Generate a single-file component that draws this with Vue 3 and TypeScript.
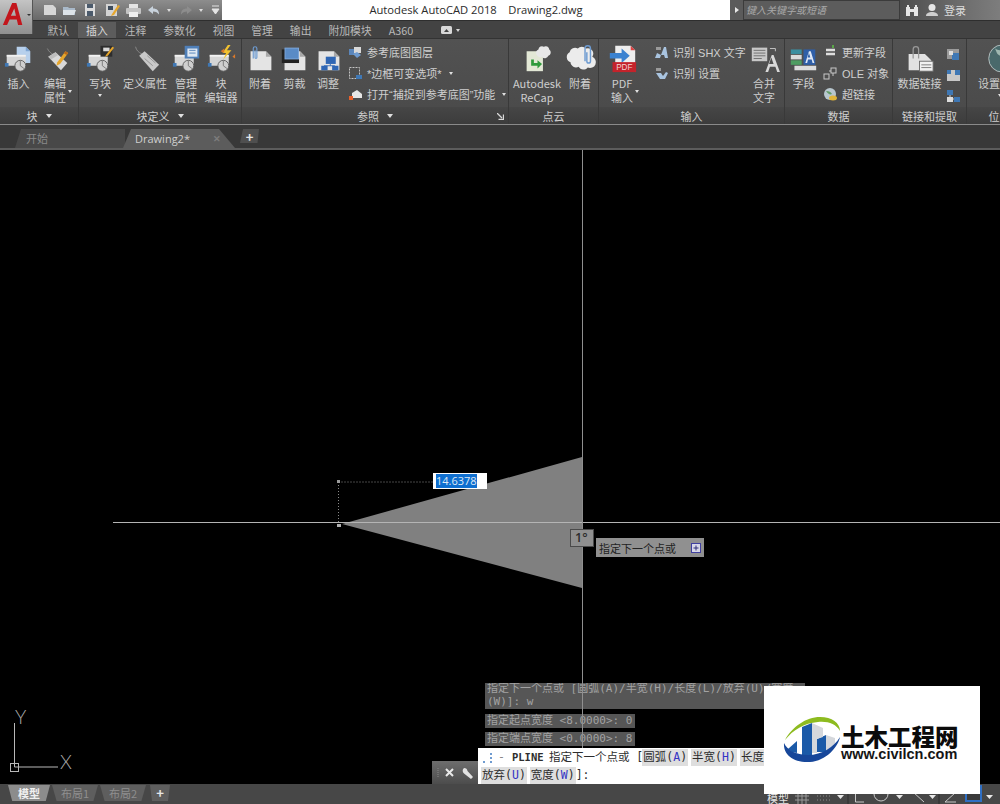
<script setup lang="ts">
interface Big { kind: 'big'; w: number; icon: string; label: string[]; caret?: boolean }
interface Small { kind: 'small'; w: number; pad?: number; rows: { icon: string; text: string; caret?: boolean }[] }
interface Mini { kind: 'mini'; w: number; icons: string[] }
interface Panel { title: string; w: number; caret?: boolean; launcher?: boolean; items: (Big | Small | Mini)[] }

const tabs = ['默认', '插入', '注释', '参数化', '视图', '管理', '输出', '附加模块', 'A360']

const box = '<rect x="3" y="12" width="21" height="12" fill="#d6d6d6"/><rect x="3" y="12" width="21" height="2" fill="#f2f2f2"/><circle cx="18" cy="24" r="6" fill="#cfcfcf" stroke="#5c5c5c"/><path d="M18 24V18M18 24l4 3" stroke="#777" fill="none"/><rect x="1" y="21" width="4" height="4" fill="#3f78b5"/>'
const sheet = '<path d="M5 8h17l6 6v15H5z" fill="#e4e4e4"/><path d="M22 8l6 6h-6z" fill="#a8a8a8"/>'

const icons: Record<string, string> = {
  insert: '<path d="M14 3h10l5 5v13H14z" fill="#b7d0ec"/><path d="M24 3l5 5h-5z" fill="#7fa6d4"/>' + box,
  editattr: '<path d="M7 5c2 4 4 5 7 7" stroke="#8a8a8a" fill="none"/><path d="M8 14l8-5 13 12-7 8z" fill="#d9d9d9"/><path d="M8 14l8-5 3 3-8 5z" fill="#bdbdbd"/><path d="M18 20l9-12 3 2-9 12-4 2z" fill="#e6a62c"/><path d="M27 8l3 2-2 2-3-2z" fill="#b96a1a"/>',
  write: box + '<rect x="16" y="2" width="13" height="12" fill="#2d2d2d"/><rect x="19" y="4" width="7" height="4" fill="#d9d9d9"/><path d="M22 12l7-9 2 1-7 9-3 1z" fill="#e6a62c"/>',
  define: '<path d="M5 3c1 4 3 6 7 8" stroke="#8a8a8a" fill="none"/><path d="M9 13l6-5 16 15-7 7z" fill="#c9c9c9"/><path d="M15 16l9 8M18 13l9 8" stroke="#8f8f8f"/>',
  manage: box + '<rect x="14" y="2" width="16" height="14" fill="#4f7fb8"/><rect x="17" y="5" width="11" height="9" fill="#dfe8f2"/><path d="M19 7h7M19 10h7" stroke="#4f7fb8"/>',
  editor: box + '<path d="M23 1l-6 9h4l-3 7 9-10h-5l4-6z" fill="#f2c230"/><path d="M15 8l4-3v5zM28 14l3-3v5z" fill="#d9792b"/>',
  attach: sheet + '<path d="M8 16V5a2 2 0 0 1 4 0v10a1 1 0 0 1-2 0V7" stroke="#6d9bd1" stroke-width="1.3" fill="none"/>',
  clip: sheet + '<rect x="2" y="6" width="19" height="15" fill="#222"/><rect x="5" y="4" width="16" height="13" fill="#7fa8da"/><rect x="6" y="5" width="14" height="11" fill="#5a8bc6"/>',
  adjust: sheet + '<rect x="13" y="14" width="11" height="8" fill="#2f66b4"/><rect x="8" y="24" width="7" height="5" fill="#2f66b4"/><rect x="20" y="24" width="7" height="5" fill="#2f66b4"/><path d="M18 22v2M11 24h12" stroke="#2f66b4"/>',
  recap: '<path d="M4 8h18v22H4z" fill="#e3e8d6"/><path d="M9 17v7h7v3l5-5-5-4v3h-4v-4z" fill="#2f9a3c"/><path d="M17 6a4 4 0 0 1 6-3 4 4 0 0 1 6 3 4 4 0 0 1-1 7 4 4 0 0 1-7 1 4 4 0 0 1-4-8z" fill="#e8e8e8"/>',
  cloud: '<path d="M4 9a6 6 0 0 1 9-4 6 6 0 0 1 9 0 6 6 0 0 1 7 9 6 6 0 0 1-5 12 6 6 0 0 1-10-1 6 6 0 0 1-9-5 6 6 0 0 1-1-11z" fill="#ececec"/><path d="M21 19V5a3 3 0 0 1 6 0v14a2 2 0 0 1-4 0V9" stroke="#6d9bd1" stroke-width="1.6" fill="none"/>',
  pdf: '<path d="M8 2h17l5 5v17H8z" fill="#eeeeee"/><path d="M25 2l5 5h-5z" fill="#d44"/><path d="M2 10h13V5l9 8-9 8v-5H2z" fill="#3b82d0"/><rect x="5" y="20" width="26" height="11" fill="#c4232b"/><text x="18" y="29" font-size="9" text-anchor="middle" fill="#f4d4d4" font-family="Liberation Sans">PDF</text>',
  merge: '<rect x="2" y="4" width="17" height="15" fill="#c8c8c8"/><path d="M4 7h13M4 10h13M4 13h13M4 16h9" stroke="#6a6a6a"/><path d="M22 5h6v3" stroke="#ccc" fill="none"/><path d="M17 31l7-19h2l7 19h-3l-2-6h-6l-2 6zM21 22h5l-2.500-7z" fill="#d8d8d8" fill-rule="evenodd"/>',
  field: '<rect x="2" y="6" width="12" height="5" fill="#3d8fa0"/><rect x="2" y="12" width="12" height="5" fill="#dcdcdc"/><rect x="2" y="18" width="12" height="5" fill="#4f9d62"/><rect x="16" y="6" width="13" height="17" fill="#2f5fa8"/><path d="M18 21l4-13h2l4 13h-2l-1-4h-4l-1 4zM20.500 15h3L22 10z" fill="#dfe8f5" fill-rule="evenodd"/><rect x="6" y="24" width="24" height="5" fill="#dcdcdc"/>',
  datalink: '<path d="M4 11h18l7 7v11H4z" fill="#e2e2e2"/><rect x="16" y="19" width="15" height="11" fill="#f2f2f2" stroke="#6a6a6a"/><path d="M18 23h11M18 26h11" stroke="#777"/><path d="M9 16V6a3 3 0 0 1 6 0v10" stroke="#999" stroke-width="1.4" fill="none"/>',
  globe: '<circle cx="18" cy="16" r="15" fill="#49696b"/><circle cx="18" cy="16" r="15" fill="none" stroke="#b9c4c4"/><path d="M10 5c4 3 8 2 10 0 3 2 6 2 8 1-1 4-6 4-8 7-4 1-7-1-8-3z" fill="#9fb7b0"/>',
  layers: '<path d="M1 4h7v6H1z" fill="#5b86bb"/><path d="M6 2h7v6H6z" fill="#d9d9d9"/><path d="M5 9l4-2 4 3-4 3z" fill="#6f9bd0"/>',
  frame: '<rect x="1.500" y="1.500" width="10" height="11" fill="none" stroke="#c4c4c4" stroke-dasharray="2 1"/><rect x="8" y="9" width="6" height="4" fill="#3f78b5"/>',
  snap: '<path d="M4 6l5-3 5 4v4H4z" fill="#e6e6e6"/><rect x="1" y="9" width="4" height="4" fill="#e8612b"/>',
  shx: '<path d="M2 2h5v3H2z" fill="#9a9a9a"/><path d="M1 13l2-5 4 2 3-8h2l2 11h-3l-1-3H7l-1 3z" fill="#a9c4e0"/>',
  ocrset: '<path d="M2 2h5v3H2z" fill="#9a9a9a"/><path d="M2 7h5l2 3 3-4 2 1-3 6H6z" fill="#a9c4e0"/>',
  update: '<path d="M3 5h9M3 9h9" stroke="#dedede" stroke-width="2.500"/><path d="M10 0v3" stroke="#5aa648" stroke-width="2"/>',
  ole: '<rect x="1" y="8" width="5" height="5" fill="none" stroke="#c8c8c8"/><rect x="8" y="2" width="5" height="5" fill="none" stroke="#c8c8c8"/><path d="M6 5h2M10 7v3" stroke="#c8c8c8"/>',
  link: '<circle cx="7" cy="7" r="6" fill="#b8c7cf"/><path d="M3 4c3 0 5 1 6 3-2 1-4 0-6-3z" fill="#5f9b66"/><ellipse cx="10" cy="11" rx="4" ry="2.500" fill="#e0b53a"/>',
  mini1: '<rect x="1" y="2" width="12" height="10" fill="#9b9b9b"/><rect x="6" y="6" width="7" height="7" fill="#3f78b5"/><path d="M3 4h4v4H3z" fill="#dedede"/>',
  mini2: '<rect x="1" y="2" width="13" height="11" fill="#c8c8c8"/><rect x="1" y="2" width="4" height="4" fill="#3f78b5"/><rect x="9" y="2" width="5" height="5" fill="#3f78b5"/>',
  mini3: '<rect x="1" y="1" width="6" height="5" fill="#3f78b5"/><rect x="8" y="8" width="6" height="5" fill="#3f78b5"/><rect x="1" y="8" width="6" height="5" fill="#ddd"/><path d="M4 6v2M7 10h1" stroke="#ccc"/>',
}

const panels: Panel[] = [
  { title: '块', w: 79, caret: true, items: [
    { kind: 'big', w: 37, icon: 'insert', label: ['插入'] },
    { kind: 'big', w: 36, icon: 'editattr', label: ['编辑', '属性'], caret: true },
  ] },
  { title: '块定义', w: 163, caret: true, items: [
    { kind: 'big', w: 42, icon: 'write', label: ['写块'], caret: true },
    { kind: 'big', w: 48, icon: 'define', label: ['定义属性'] },
    { kind: 'big', w: 34, icon: 'manage', label: ['管理', '属性'] },
    { kind: 'big', w: 36, icon: 'editor', label: ['块', '编辑器'] },
  ] },
  { title: '参照', w: 267, caret: true, launcher: true, items: [
    { kind: 'big', w: 36, icon: 'attach', label: ['附着'] },
    { kind: 'big', w: 33, icon: 'clip', label: ['剪裁'] },
    { kind: 'big', w: 34, icon: 'adjust', label: ['调整'] },
    { kind: 'small', w: 160, rows: [
      { icon: 'layers', text: '参考底图图层' },
      { icon: 'frame', text: '*边框可变选项*', caret: true },
      { icon: 'snap', text: '打开“捕捉到参考底图”功能', caret: true },
    ] },
  ] },
  { title: '点云', w: 90, items: [
    { kind: 'big', w: 56, icon: 'recap', label: ['Autodesk', 'ReCap'] },
    { kind: 'big', w: 30, icon: 'cloud', label: ['附着'] },
  ] },
  { title: '输入', w: 186, items: [
    { kind: 'big', w: 46, icon: 'pdf', label: ['PDF', '输入'], caret: true },
    { kind: 'small', w: 100, pad: 9, rows: [
      { icon: 'shx', text: '识别 SHX 文字' },
      { icon: 'ocrset', text: '识别 设置' },
    ] },
    { kind: 'big', w: 38, icon: 'merge', label: ['合并', '文字'] },
  ] },
  { title: '数据', w: 108, items: [
    { kind: 'big', w: 37, icon: 'field', label: ['字段'] },
    { kind: 'small', w: 70, pad: 1, rows: [
      { icon: 'update', text: '更新字段' },
      { icon: 'ole', text: 'OLE 对象' },
      { icon: 'link', text: '超链接' },
    ] },
  ] },
  { title: '链接和提取', w: 74, items: [
    { kind: 'big', w: 53, icon: 'datalink', label: ['数据链接'] },
    { kind: 'mini', w: 18, icons: ['mini1', 'mini2', 'mini3'] },
  ] },
  { title: '位置', w: 66, items: [
    { kind: 'big', w: 66, icon: 'globe', label: ['设置位置'], caret: true },
  ] },
]
</script>

<template>
  <div class="app">
    <header class="top">
      <div class="logo">
        <svg width="22" height="24" viewBox="0 0 26 26" preserveAspectRatio="none">
          <path d="M1 25L12 1h5l7 24h-5l-1.500-6H9l-3 6zM10.500 15h6L14.500 7z" fill="#c3161c" fill-rule="evenodd" />
        </svg>
        <span class="logo-caret"></span>
      </div>
      <div class="top-right">
        <div class="titlebar">
          <div class="qat">
            <svg width="178" height="14" viewBox="0 0 178 14">
              <path d="M2 2h9l3 3v7H2z" fill="#d6d6d6" />
              <path d="M21 4h5l1 1h6v7H21z" fill="#a9b9c9" />
              <path d="M21 7h13l-2 5H21z" fill="#dde3e8" />
              <rect x="43" y="1" width="10" height="12" fill="#dcdcdc" />
              <rect x="45" y="1" width="6" height="4" fill="#4b5a6b" />
              <rect x="45" y="8" width="6" height="5" fill="#4b5a6b" />
              <rect x="64" y="1" width="11" height="12" fill="#d3d3d3" />
              <rect x="66" y="3" width="5" height="4" fill="#3e4c5c" />
              <path d="M70 11l6-9 2 1-6 9-3 1z" fill="#e6a62c" />
              <rect x="87" y="1" width="9" height="4" fill="#e4e4e4" />
              <rect x="84" y="5" width="15" height="6" rx="1" fill="#c4c4c4" />
              <rect x="87" y="9" width="9" height="5" fill="#efefef" />
              <path d="M106 7l5-4v2.500c4 0 6 2 6 6-1.500-2-3-3-6-3V11z" fill="#c8d2dc" />
              <path d="M125 6h4l-2 3z" fill="#ddd" />
              <path d="M150 7l-5-4v2.500c-4 0-6 2-6 6 1.500-2 3-3 6-3V11z" fill="#8d8d8d" />
              <path d="M157 6h4l-2 3z" fill="#ddd" />
              <path d="M170 3h7M170 6h7l-3.500 5z" stroke="#e4e4e4" fill="#e4e4e4" />
            </svg>
          </div>
          <div class="title">Autodesk AutoCAD 2018&nbsp;&nbsp;&nbsp;&nbsp;Drawing2.dwg</div>
          <div class="search-arrow"><span></span></div>
          <div class="search">键入关键字或短语</div>
          <div class="account">
            <svg width="14" height="13" viewBox="0 0 14 13">
              <path d="M1 3h4v9H1zM9 3h4v9H9zM5 5h4v3H5zM2 1h2v2H2zM10 1h2v2h-2z" fill="#e6e6e6" />
            </svg>
            <svg width="14" height="14" viewBox="0 0 14 14">
              <circle cx="7" cy="4.500" r="3.500" fill="#e6e6e6" />
              <path d="M1 13c0-3 3-4 6-4s6 1 6 4z" fill="#cfcfcf" />
            </svg>
            <span>登录</span>
          </div>
        </div>
        <nav class="tabs">
          <span v-for="t in tabs" :key="t" class="tab" :class="{ on: t === '插入' }">{{ t }}</span>
          <svg class="tab-video" width="22" height="8" viewBox="0 0 22 8">
            <rect x="0" y="0" width="11" height="8" rx="1.500" fill="#d8d8d8" />
            <path d="M3 6l2.500-3L8 6z" fill="#444" />
            <path d="M15 3h4l-2 3z" fill="#d8d8d8" />
          </svg>
        </nav>
      </div>
    </header>

    <section class="ribbon">
      <div v-for="p in panels" :key="p.title" class="panel" :style="{ width: p.w + 'px' }">
        <div class="panel-body">
          <template v-for="(it, i) in p.items" :key="i">
            <div v-if="it.kind === 'big'" class="big" :style="{ width: it.w + 'px' }">
              <svg class="big-icon" width="29" height="29" viewBox="0 0 32 32" v-html="icons[it.icon]"></svg>
              <div class="big-label">
                <div v-for="l in it.label" :key="l">{{ l }}</div>
              </div>
              <span v-if="it.caret" class="caret" :class="it.label.length > 1 ? 'caret-side' : 'caret-under'"></span>
            </div>
            <div v-else-if="it.kind === 'small'" class="small" :style="{ width: it.w + 'px', paddingLeft: (it.pad ?? 3) + 'px' }">
              <div v-for="r in it.rows" :key="r.text" class="small-row">
                <svg width="14" height="14" viewBox="0 0 14 14" v-html="icons[r.icon]"></svg>
                <span>{{ r.text }}</span>
                <span v-if="r.caret" class="caret"></span>
              </div>
            </div>
            <div v-else class="mini" :style="{ width: it.w + 'px' }">
              <svg v-for="m in it.icons" :key="m" width="14" height="14" viewBox="0 0 14 14" v-html="icons[m]"></svg>
            </div>
          </template>
        </div>
        <div class="panel-title">
          <span>{{ p.title }}</span>
          <span v-if="p.caret" class="caret caret-title"></span>
          <svg v-if="p.launcher" class="launcher" width="7" height="7" viewBox="0 0 7 7">
            <path d="M0 0l5 5M6.500 1.500v5h-5" stroke="#d8d8d8" fill="none" stroke-width="1.300" />
          </svg>
        </div>
      </div>
    </section>

    <div class="doctabs">
      <div class="doc doc-start"><span>开始</span></div>
      <div class="doc doc-active"><span>Drawing2*</span><i>✕</i></div>
      <div class="doc doc-plus">+</div>
    </div>

    <main class="canvas">
      <div class="history">
        <div class="hist-block">
          <div><span class="hist-line">指定下一个点或 [圆弧(A)/半宽(H)/长度(L)/放弃(U)/宽度</span></div>
          <div><span class="hist-line">(W)]: w</span></div>
        </div>
        <div class="hist-single">指定起点宽度 &lt;8.0000&gt;: 0</div>
        <div class="hist-single">指定端点宽度 &lt;0.0000&gt;: 8</div>
      </div>

      <svg class="drawing" width="1000" height="634" viewBox="0 150 1000 634">
        <polygon points="342,524 582,457 582,588" fill="#808080" />
        <path d="M338.500 482V525M338.500 482H434" stroke="#8a8a8a" stroke-dasharray="1 2" fill="none" />
        <rect x="337" y="480" width="3" height="3" fill="#9a9a9a" />
        <rect x="337" y="524" width="4" height="3" fill="#b0b0b0" />
        <path d="M113 522.500H1000" stroke="#b4b4b4" />
        <path d="M582.500 150V748" stroke="#8f8f8f" />
        <path d="M14.500 723V767H58" stroke="#b8b8b8" fill="none" />
        <rect x="10.500" y="763.500" width="8" height="8" fill="none" stroke="#b8b8b8" />
      </svg>
      <span class="ucs ucs-y">Y</span>
      <span class="ucs ucs-x">X</span>

      <div class="dyn-input"><span>14.6378</span></div>
      <div class="angle">1°</div>
      <div class="prompt">
        <span>指定下一个点或</span>
        <svg width="10" height="10" viewBox="0 0 10 10">
          <rect x="0.500" y="0.500" width="9" height="9" fill="#d8d8e8" stroke="#4040a0" />
          <path d="M5 2.500v5M2.500 5h5" stroke="#30307a" />
        </svg>
      </div>

      <div class="cmd">
        <div class="cmd-grip">
          <svg width="42" height="14" viewBox="0 0 42 14">
            <path d="M2 2v10" stroke="#8a8a8a" stroke-dasharray="1 1" />
            <path d="M10 3l7 7M17 3l-7 7" stroke="#eaeaea" stroke-width="2" />
            <path d="M28 2a3.500 3.500 0 0 0 0 5.500l7 5.500 2-2-5.500-6a3.500 3.500 0 0 0-3.500-3z" fill="#e2e2e2" />
          </svg>
        </div>
        <div class="cmd-input">
          <div class="cmd-line">
            <svg class="cmd-icon" width="14" height="12" viewBox="0 0 14 12">
              <path d="M2 10h2M9 2h2M9 6h2M9 10h2" stroke="#6f9bd0" stroke-width="2" />
            </svg>
            <span class="cmd-dash">-</span>
            <b>PLINE</b>
            <span>指定下一个点或 [</span><span class="chip tight">圆弧(<em>A</em>)</span><span class="chip">半宽(<em>H</em>)</span><span class="chip">长度(<em>L</em>)</span>
          </div>
          <div class="cmd-line">
            <span class="chip first">放弃(<em>U</em>)</span><span class="chip">宽度(<em>W</em>)</span><span>]:</span>
          </div>
        </div>
      </div>
    </main>

    <footer class="status">
      <div class="layout-tabs">
        <div class="ltab ltab-on">模型</div>
        <div class="ltab">布局1</div>
        <div class="ltab">布局2</div>
        <div class="ltab ltab-plus">+</div>
      </div>
      <div class="status-right">
        <span class="status-model">模型</span>
        <svg width="209" height="20" viewBox="0 0 209 20">
          <path d="M7 3v17M11 3v17M15 3v17M4 12h14M4 16h14" stroke="#9a9a9a" />
          <path d="M26 12h14M26 16h14" stroke="#8c8c8c" stroke-dasharray="1 2" />
          <path d="M46 11h7l-3.500 4z" fill="#e8e8e8" />
          <path d="M57 6v14" stroke="#2f2f2f" />
          <path d="M64.500 8v10H73" stroke="#c8c8c8" fill="none" />
          <circle cx="90" cy="10" r="7" stroke="#c8c8c8" fill="none" />
          <path d="M105 11h7l-3.500 4z" fill="#e8e8e8" />
          <path d="M122 8l11 10" stroke="#c8c8c8" />
          <path d="M138 11h7l-3.500 4z" fill="#e8e8e8" />
          <path d="M148 8v12" stroke="#2f2f2f" />
          <path d="M154 18l10-9M154 18h11" stroke="#c8c8c8" fill="none" />
          <path d="M175 2h15v15h-15z" stroke="#2f6fc4" stroke-width="2" fill="#3a3a3a" />
          <path d="M195 11h7l-3.500 4z" fill="#e8e8e8" />
        </svg>
      </div>
    </footer>

    <aside class="mark">
      <svg class="mark-logo" width="58" height="48" viewBox="0 0 58 48">
        <path d="M1 23C8 10 22 0 36 0c12 0 20 6 20 14-4-7-12-10-22-9C20 6 9 13 1 23z" fill="#8dbb1f" />
        <path d="M18 10l10-4v32H18zM4 32l9-8v12l-5-1zM33 22l9-4v17h-9z" fill="#1b5aa8" />
        <path d="M28 6l11 5v9l-6 2v14h-5zM42 18l9 3v6l-9 7z" fill="#d5d8dc" />
        <path d="M0 26c-1 12 10 20 26 19 16-1 28-15 30-25-6 10-18 18-32 18C12 38 3 33 0 26z" fill="#17479a" />
      </svg>
      <div class="mark-text">
        <div class="mark-cn">土木工程网</div>
        <div class="mark-url">www.civilcn.com</div>
      </div>
    </aside>
  </div>
</template>

<style>
html, body { margin: 0; background: #000; }
</style>

<style scoped>
* { box-sizing: border-box; }
.app {
  position: relative;
  width: 1000px;
  height: 804px;
  overflow: hidden;
  display: flex;
  flex-direction: column;
  font-family: "Noto Sans CJK SC", "Noto Sans", sans-serif;
  font-size: 11px;
  color: #cfcfcf;
  background: #000;
}

/* top bar */
.top { display: flex; height: 38px; background: #434343; }
.logo {
  width: 33px;
  height: 34px;
  display: flex;
  align-items: center;
  padding: 0 0 6px 2px;
  background: linear-gradient(#c4c4c4, #8f8f8f);
  border-right: 1px solid #555;
  position: relative;
}
.logo-caret { position: absolute; right: 1px; top: 14px; border: 2.5px solid transparent; border-top-color: #333; }
.top-right { flex: 1; display: flex; flex-direction: column; min-width: 0; }
.titlebar { display: flex; height: 20px; }
.qat {
  width: 189px;
  display: flex;
  align-items: center;
  padding: 0 0 0 9px;
  background: linear-gradient(#8d8d8d, #686868);
}
.title {
  width: 508px;
  background: #fff;
  color: #2b2b2b;
  text-align: center;
  font: 11.2px/20px "Open Sans", sans-serif;
}
.search-arrow {
  width: 13px;
  display: flex;
  align-items: center;
  justify-content: center;
  background: #5b5b5b;
}
.search-arrow span { border: 3px solid transparent; border-left: 4px solid #e8e8e8; border-right: 0; }
.search {
  width: 157px;
  background: #5c5c5c;
  border: 1px solid #3b3b3b;
  color: #a8a8a8;
  font-size: 10px;
  font-style: italic;
  line-height: 17px;
  padding-left: 2px;
}
.account {
  flex: 1;
  display: flex;
  align-items: center;
  gap: 6px;
  padding-left: 5px;
  background: linear-gradient(90deg, #4e4e4e, #6c6c6c 60%, #7d7d7d);
  color: #dcdcdc;
}
.account span { margin-left: -1px; }
.tabs {
  flex: 1;
  display: flex;
  align-items: flex-end;
  padding-left: 6px;
  background: #434343;
  border-top: 1px solid #2e2e2e;
}
.tab { padding: 0 8.5px; height: 16px; font-size: 10.8px; line-height: 16px; color: #b9b9b9; white-space: nowrap; }
.tab.on { background: #5c5c5c; color: #d8d8d8; padding: 0 8px; margin: 0 .5px; }
.tab-video { margin: 0 0 4px 19px; }

/* ribbon */
.ribbon {
  display: flex;
  height: 87px;
  background: #3f3f3f;
  border-top: 1px solid #333;
  border-bottom: 1px solid #8a8a8a;
}
.panel {
  flex: none;
  display: flex;
  flex-direction: column;
  border-right: 1px solid #393939;
  overflow: hidden;
}
.panel-body {
  height: 68px;
  display: flex;
  background: linear-gradient(#525252, #4b4b4b);
}
.panel-title {
  position: relative;
  flex: 1;
  display: flex;
  align-items: center;
  justify-content: center;
  gap: 8px;
  background: linear-gradient(#464646, #3c3c3c);
  color: #cfcfcf;
}
.launcher { position: absolute; right: 4px; top: 6px; }
.big {
  flex: none;
  position: relative;
  display: flex;
  flex-direction: column;
  align-items: center;
  padding-top: 5px;
  line-height: 14px;
  text-align: center;
}
.big-icon { flex: none; overflow: visible; }
.big-label { margin-top: 3px; white-space: nowrap; }
.caret { display: inline-block; border: 2.5px solid transparent; border-top: 3px solid #e0e0e0; border-bottom: 0; }
.caret-title { border-width: 4px 3.5px 0; }
.caret-side { position: absolute; left: calc(50% + 13px); top: 51px; }
.caret-under { margin-top: 4px; }
.small {
  flex: none;
  display: flex;
  flex-direction: column;
  gap: 7px;
  padding-top: 6px;
}
.small-row {
  display: flex;
  align-items: center;
  gap: 5px;
  height: 14px;
  white-space: nowrap;
  font-family: "Liberation Sans", "Noto Sans CJK SC", sans-serif;
}
.small-row svg { flex: none; }
.small-row .caret { margin-left: 2px; }
.mini { display: flex; flex-direction: column; gap: 7px; padding-top: 8px; }

/* document tabs */
.doctabs {
  height: 25px;
  display: flex;
  align-items: flex-end;
  padding-left: 15px;
  background: #383838;
  border-bottom: 2px solid #5c5c5c;
}
.doc { height: 19px; display: flex; align-items: center; }
.doc-start {
  width: 110px;
  padding: 0 0 1px 11px;
  color: #8a8a8a;
  background: #484848;
  clip-path: polygon(0 100%, 6px 0, 100% 0, 100% 100%);
}
.doc-active {
  width: 112px;
  margin-left: -2px;
  padding: 0 14px 1px 12px;
  justify-content: space-between;
  background: #5c5c5c;
  color: #cfcfcf;
  font: 11px "Open Sans", sans-serif;
  clip-path: polygon(0 100%, 8px 0, 96px 0, 100% 100%);
}
.doc-active i { font-style: normal; font-size: 9px; font-weight: 700; color: #7d7d7d; }
.doc-plus {
  width: 19px;
  height: 14px;
  margin: 0 0 5px 5px;
  justify-content: center;
  background: #4f4f4f;
  color: #e4e4e4;
  font-size: 13px;
  font-weight: 700;
  clip-path: polygon(0 100%, 3px 0, 100% 0, 92% 100%);
}

/* canvas */
.canvas { position: relative; flex: 1; background: #000; overflow: hidden; }
.drawing { position: absolute; left: 0; top: 0; z-index: 1; pointer-events: none; }
.ucs { position: absolute; z-index: 1; color: #a8a8a8; font: 300 19px "Lato", sans-serif; }
.ucs-y { left: 15px; top: 555px; }
.ucs-x { left: 60px; top: 600px; }
.dyn-input {
  position: absolute;
  z-index: 2;
  left: 433px;
  top: 323px;
  width: 54px;
  height: 16px;
  background: #fff;
  padding-left: 3px;
}
.dyn-input span {
  display: block;
  width: 41px;
  height: 14px;
  margin-top: 1px;
  background: #0f6fd0;
  color: #dfe9f5;
  font: 11px/14px "Open Sans", sans-serif;
}
.angle {
  position: absolute;
  z-index: 2;
  left: 570px;
  top: 379px;
  width: 24px;
  height: 18px;
  background: #8f8f8f;
  border: 1px solid #4a4a4a;
  color: #2c2c2c;
  font: 600 12.5px/16px "Open Sans", sans-serif;
  padding-left: 4px;
}
.prompt {
  position: absolute;
  z-index: 2;
  left: 596px;
  top: 388px;
  width: 108px;
  height: 19px;
  display: flex;
  align-items: center;
  justify-content: space-between;
  padding: 0 3px;
  background: #909090;
  color: #222;
}
.history {
  position: absolute;
  left: 485px;
  top: 533px;
  width: 320px;
  font: 11px/12.500px "DejaVu Sans Mono", "Noto Sans CJK SC", monospace;
  color: #a2a2a2;
}
.hist-block { background: #565656; padding: 0 2px; height: 26px; white-space: nowrap; overflow: hidden; }
.hist-single {
  width: 150px;
  height: 14px;
  line-height: 14px;
  margin-top: 4.500px;
  padding: 0 2px;
  background: #565656;
  white-space: nowrap;
}
.cmd {
  position: absolute;
  z-index: 3;
  left: 432px;
  top: 598px;
  width: 333px;
  height: 36px;
  display: flex;
  align-items: flex-end;
}
.cmd-grip {
  flex: none;
  width: 46px;
  height: 23px;
  display: flex;
  align-items: center;
  padding-left: 4px;
  background: linear-gradient(#6e6e6e, #4c4c4c);
}
.cmd-input {
  flex: 1;
  height: 36px;
  background: #fff;
  color: #2d2d2d;
  overflow: hidden;
  font: 11.500px/17px "DejaVu Sans Mono", "Noto Sans CJK SC", monospace;
}
.cmd-line { display: flex; align-items: center; height: 17px; margin-top: 1px; white-space: nowrap; padding-left: 3px; }
.cmd-line > * { flex: none; }
.cmd-line b { width: 37px; font-size: 10.500px; font-weight: 700; }
.cmd-icon { flex: none; }
.cmd-dash { margin: 0 7px 0 3px; color: #888; }
.chip { background: #dedede; padding: 0 1px; margin-left: 3px; }
.chip.first { margin-left: 0; }
.chip.tight { margin-left: -1px; }
.chip em { font-style: normal; color: #3333c4; }

/* status bar */
.status {
  height: 20px;
  display: flex;
  justify-content: space-between;
  background: #474747;
}
.layout-tabs { display: flex; padding: 1px 0 3px 8px; }
.ltab {
  width: 46px;
  margin-right: 2px;
  text-align: center;
  line-height: 16px;
  background: #5e5e5e;
  color: #8f8f8f;
  clip-path: polygon(0 0, 100% 0, 90% 100%, 10% 100%);
}
.ltab-on { width: 42px; background: #8c8c8c; color: #f0f0f0; font-weight: 700; }
.ltab-plus { width: 20px; margin-left: 2px; color: #e6e6e6; font-weight: 700; font-size: 13px; }
.status-right { width: 233px; display: flex; }
.status-model { width: 24px; color: #e4e4e4; line-height: 28px; white-space: nowrap; }

/* site mark */
.mark {
  position: absolute;
  z-index: 5;
  left: 764px;
  top: 686px;
  width: 216px;
  height: 108px;
  display: flex;
  align-items: flex-start;
  padding: 31px 0 0 20px;
  background: #fff;
  color: #111;
}
.mark-logo { flex: none; overflow: visible; }
.mark-text { margin: 7px 0 0 -1px; }
.mark-cn { font-size: 23.500px; line-height: 24px; font-weight: 900; color: #0b0b0b; }
.mark-url { font: 700 14.500px/12px "Liberation Sans", sans-serif; color: #161616; }
</style>
